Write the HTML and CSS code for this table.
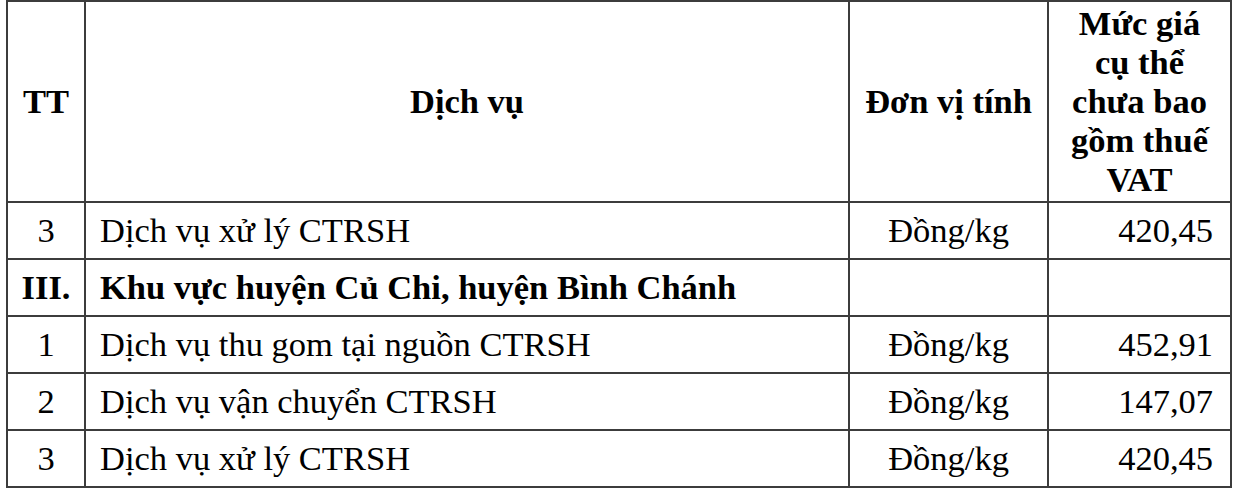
FILE: index.html
```html
<!DOCTYPE html>
<html lang="vi">
<head>
<meta charset="utf-8">
<link rel="stylesheet" href="styles.css">
</head>
<body>
<table class="price-table">
  <colgroup>
    <col class="c-tt">
    <col class="c-name">
    <col class="c-unit">
    <col class="c-price">
  </colgroup>
  <thead>
    <tr class="head-row">
      <th>TT</th>
      <th>Dịch vụ</th>
      <th>Đơn vị tính</th>
      <th>Mức giá<br>cụ thể<br>chưa bao<br>gồm thuế<br>VAT</th>
    </tr>
  </thead>
  <tbody>
    <tr>
      <td class="tt">3</td>
      <td class="name">Dịch vụ xử lý CTRSH</td>
      <td class="unit">Đồng/kg</td>
      <td class="price">420,45</td>
    </tr>
    <tr class="section">
      <td class="tt">III.</td>
      <td class="name">Khu vực huyện Củ Chi, huyện Bình Chánh</td>
      <td class="unit"></td>
      <td class="price"></td>
    </tr>
    <tr>
      <td class="tt">1</td>
      <td class="name">Dịch vụ thu gom tại nguồn CTRSH</td>
      <td class="unit">Đồng/kg</td>
      <td class="price">452,91</td>
    </tr>
    <tr>
      <td class="tt">2</td>
      <td class="name">Dịch vụ vận chuyển CTRSH</td>
      <td class="unit">Đồng/kg</td>
      <td class="price">147,07</td>
    </tr>
    <tr>
      <td class="tt">3</td>
      <td class="name">Dịch vụ xử lý CTRSH</td>
      <td class="unit">Đồng/kg</td>
      <td class="price">420,45</td>
    </tr>
  </tbody>
</table>
</body>
</html>
```

FILE: styles.css
```css
html, body {
  margin: 0;
  padding: 0;
  background: #fff;
}

body {
  font-family: "Liberation Serif", "Times New Roman", "DejaVu Serif", serif;
  color: #000;
}

.price-table {
  border-collapse: collapse;
  table-layout: fixed;
  width: 1226px;
  margin: 0 0 0 6px;
  font-family: inherit;
  font-size: 34.5px;
  line-height: 39px;
}

.c-tt { width: 78px; }
.c-name { width: 764px; }
.c-unit { width: 199px; }
.c-price { width: 183px; }

.price-table th,
.price-table td {
  border: 2px solid #3c3c3c;
  padding: 0;
  vertical-align: middle;
  font-family: inherit;
}

.head-row {
  height: 201px;
}

.head-row th {
  font-weight: bold;
  text-align: center;
}

tbody tr {
  height: 57px;
}

.tt {
  text-align: center;
}

.name {
  text-align: left;
  padding-left: 14px !important;
}

.unit {
  text-align: center;
}

.price {
  text-align: right;
  padding-right: 17px !important;
}

.section td {
  font-weight: bold;
}
```
